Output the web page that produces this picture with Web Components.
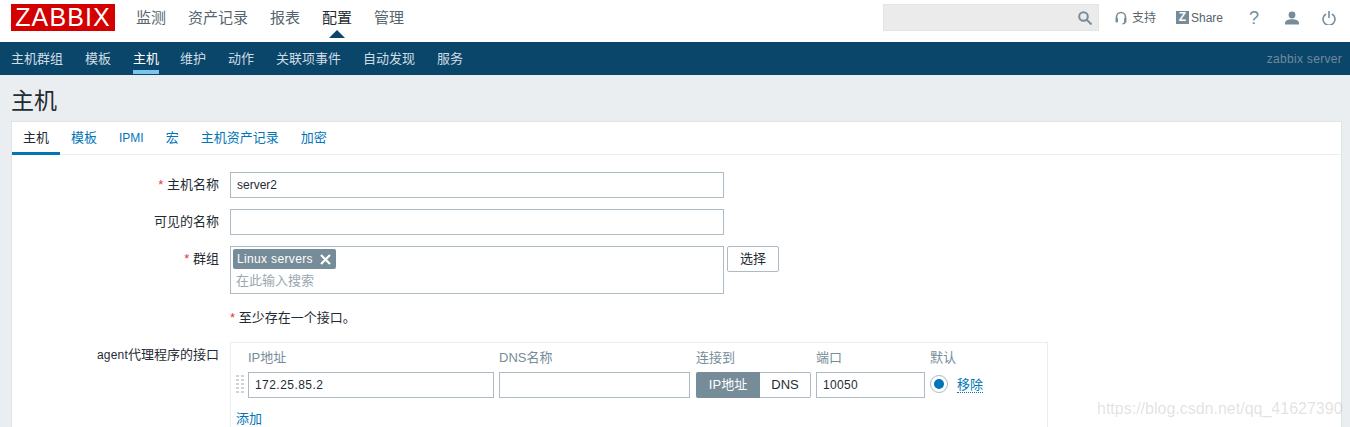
<!DOCTYPE html>
<html lang="zh">
<head>
<meta charset="utf-8">
<title>主机</title>
<style>
  html, body { margin: 0; height: 427px; overflow: hidden; }
  body {
    background: #ebeef0;
    color: #1f2c33;
    font: 13px/16px "Liberation Sans", "Noto Sans CJK SC", sans-serif;
    position: relative;
  }
</style>
</head>
<body>
<zbx-topbar></zbx-topbar>
<zbx-subnav server="zabbix server"></zbx-subnav>
<zbx-title>主机</zbx-title>
<zbx-card>
  <zbx-tabs></zbx-tabs>
  <zbx-row label="主机名称" required><zbx-input value="server2"></zbx-input></zbx-row>
  <zbx-row label="可见的名称"><zbx-input></zbx-input></zbx-row>
  <zbx-row label="群组" required><zbx-multiselect></zbx-multiselect></zbx-row>
  <zbx-row><zbx-note>至少存在一个接口。</zbx-note></zbx-row>
  <zbx-row label="agent代理程序的接口"><zbx-interfaces></zbx-interfaces></zbx-row>
</zbx-card>
<zbx-watermark>https://blog.csdn.net/qq_41627390</zbx-watermark>

<script>
const FONT = '"Liberation Sans", "Noto Sans CJK SC", sans-serif';

class ZbxTopbar extends HTMLElement {
  connectedCallback() {
    this.attachShadow({ mode: 'open' });
    const items = ['监测', '资产记录', '报表', '配置', '管理'];
    this.shadowRoot.innerHTML = `
      <style>
        :host { display: flex; align-items: flex-start; height: 42px; background: #fff; padding: 4px 14px 0 11px; box-sizing: border-box; font-family: ${FONT}; }
        .logo { width: 104px; height: 27px; background: #d40000; color: #fff; font-size: 25px; line-height: 27px; letter-spacing: 1.1px; text-align: center; overflow: hidden; }
        nav { display: flex; gap: 22px; margin-left: 21px; margin-top: 4px; font-size: 15px; line-height: 20px; color: #56646d; }
        nav .on { color: #1f2c33; position: relative; }
        nav .on::after { content: ""; position: absolute; left: 7px; top: 22px; border: 8px solid transparent; border-top: 0; border-bottom-color: #0a466a; }
        .right { margin-left: auto; height: 27px; display: flex; align-items: center; color: #56646d; font-size: 12px; white-space: nowrap; }
        .search { width: 216px; height: 27px; background: #ebebeb; border: 1px solid #e4e4e4; box-sizing: border-box; display: flex; align-items: center; justify-content: flex-end; padding-right: 6px; margin-right: 16px; }
        .link { display: flex; align-items: center; }
        .z { width: 13px; height: 13px; background: #768d99; color: #fff; font: bold 12px/13px "Liberation Sans", sans-serif; text-align: center; margin-right: 2px; }
        .q { margin-left: 25px; width: 10px; font-size: 18px; color: #768d99; text-align: center; }
        svg { display: block; flex: none; }
      </style>
      <div class="logo">ZABBIX</div>
      <nav>${items.map(t => `<span class="${t === '配置' ? 'on' : ''}">${t}</span>`).join('')}</nav>
      <div class="right">
        <div class="search">
          <svg width="14" height="14" viewBox="0 0 14 14" fill="none" stroke="#768d99" stroke-width="2"><circle cx="5.500" cy="5.500" r="4.300"/><path d="M8.700 8.700l4.800 4.800"/></svg>
        </div>
        <span class="link" style="width:41px;gap:5px">
          <svg width="12" height="14" viewBox="0 0 12 14" fill="none" stroke="#768d99" stroke-width="1.600"><path d="M1.500 8V6a4.500 4.500 0 0 1 9 0v2"/><rect x=".5" y="7" width="2.500" height="4.500" rx="1" fill="#768d99" stroke="none"/><rect x="9" y="7" width="2.500" height="4.500" rx="1" fill="#768d99" stroke="none"/><path d="M10 11q0 1.600-2.500 1.800"/></svg>
          <span>支持</span>
        </span>
        <span class="link" style="margin-left:20px;width:48px">
          <span class="z">Z</span><span>Share</span>
        </span>
        <span class="q">?</span>
        <svg style="margin-left:26px" width="14" height="14" viewBox="0 0 14 14" fill="#768d99"><circle cx="7" cy="4" r="3.400"/><path d="M0 13.500v-1.500c0-2.500 3-3.800 7-3.800s7 1.300 7 3.800v1.500z"/></svg>
        <svg style="margin-left:23px" width="14" height="14" viewBox="0 0 14 14" fill="none" stroke="#768d99" stroke-width="1.600"><path d="M4 3a6 6 0 1 0 6 0"/><path d="M7 0v7"/></svg>
      </div>`;
  }
}

class ZbxSubnav extends HTMLElement {
  connectedCallback() {
    this.attachShadow({ mode: 'open' });
    const items = ['主机群组', '模板', '主机', '维护', '动作', '关联项事件', '自动发现', '服务'];
    this.shadowRoot.innerHTML = `
      <style>
        :host { display: flex; align-items: flex-start; height: 33px; background: #0a466a; padding: 0 8px 0 11px; box-sizing: border-box; font-family: ${FONT}; font-size: 13px; line-height: 16px; color: #d0dde5; }
        nav { display: flex; gap: 22px; align-items: flex-start; }
        nav span { padding: 9px 0 3px; }
        nav .on { color: #fff; border-bottom: 4px solid #7cc4f0; margin-right: -1px; }
        .srv { margin-left: auto; padding-top: 9px; font-size: 12px; letter-spacing: .3px; color: #6f8a9b; }
      </style>
      <nav>${items.map(t => `<span class="${t === '主机' ? 'on' : ''}">${t}</span>`).join('')}</nav>
      <div class="srv">${this.getAttribute('server')}</div>`;
  }
}

class ZbxTitle extends HTMLElement {
  connectedCallback() {
    this.attachShadow({ mode: 'open' }).innerHTML = `
      <style>:host { display: block; height: 46px; padding: 13px 11px 0; box-sizing: border-box; font-size: 23px; line-height: 26px; color: #1f2c33; }</style>
      <slot></slot>`;
  }
}

class ZbxCard extends HTMLElement {
  connectedCallback() {
    this.attachShadow({ mode: 'open' }).innerHTML = `
      <style>:host { display: block; margin: 0 8px 0 11px; height: 320px; background: #fff; border: 1px solid #dfe4e7; box-sizing: border-box; }</style>
      <slot></slot>`;
  }
}

class ZbxTabs extends HTMLElement {
  connectedCallback() {
    this.attachShadow({ mode: 'open' });
    const items = ['主机', '模板', 'IPMI', '宏', '主机资产记录', '加密'];
    this.shadowRoot.innerHTML = `
      <style>
        :host { display: flex; height: 32px; border-bottom: 1px solid #ebeef0; margin-bottom: 17px; font-size: 13px; line-height: 16px; color: #0275b8; }
        span { padding: 8px 11px 0; box-sizing: border-box; height: 33px; }
        .on { color: #1f2c33; box-shadow: inset 0 -3px 0 #0275b8; width: 48px; }
        .latin { font-size: 12px; }
      </style>
      ${items.map((t, i) => `<span class="${i === 0 ? 'on' : ''} ${t === 'IPMI' ? 'latin' : ''}">${t}</span>`).join('')}`;
  }
}

class ZbxRow extends HTMLElement {
  connectedCallback() {
    this.attachShadow({ mode: 'open' });
    const label = (this.getAttribute('label') || '').replace(/^[a-z]+/, m => `<span class="latin">${m}</span>`);
    const req = this.hasAttribute('required') ? '<b>*</b> ' : '';
    this.shadowRoot.innerHTML = `
      <style>
        :host { display: grid; grid-template-columns: 207px 1fr; column-gap: 11px; margin-bottom: 11px; font-size: 13px; line-height: 16px; color: #1f2c33; }
        label { text-align: right; padding-top: 5px; }
        b { color: #e33734; font-weight: 400; }
        .latin { font-size: 12px; letter-spacing: .2px; }
      </style>
      <label>${req}${label}</label>
      <div><slot></slot></div>`;
  }
}

class ZbxInput extends HTMLElement {
  connectedCallback() {
    const w = this.getAttribute('width') || '494';
    const sp = this.getAttribute('spacing') || '0';
    this.attachShadow({ mode: 'open' }).innerHTML = `
      <style>
        :host { display: block; width: ${w}px; height: 26px; border: 1px solid #acbbc4; box-sizing: border-box; background: #fff; padding: 4px 6px 0; font-size: 12px; line-height: 16px; letter-spacing: ${sp}px; color: #1f2c33; }
      </style>
      ${this.getAttribute('value') || ''}`;
  }
}

class ZbxMultiselect extends HTMLElement {
  connectedCallback() {
    this.attachShadow({ mode: 'open' }).innerHTML = `
      <style>
        :host { display: flex; gap: 3px; align-items: flex-start; }
        .box { width: 494px; height: 48px; border: 1px solid #acbbc4; box-sizing: border-box; padding: 2px; }
        .tag { display: flex; align-items: center; justify-content: space-between; width: 103px; box-sizing: border-box; height: 20px; background: #768d99; color: #fff; border-radius: 2px; padding: 0 5px 0 4px; font-size: 12px; letter-spacing: .35px; }
        .ph { color: #9aa7af; font-size: 13px; line-height: 16px; padding: 4px 0 0 3px; }
        button { width: 52px; height: 26px; background: #fff; border: 1px solid #acbbc4; border-radius: 2px; font: 13px/16px ${FONT}; color: #1f2c33; padding: 0; }
        svg { display: block; }
      </style>
      <div class="box">
        <div class="tag"><span>Linux servers</span>
          <svg width="11" height="11" viewBox="0 0 11 11" stroke="#fff" stroke-width="2.200"><path d="M1 1l9 9M10 1l-9 9"/></svg>
        </div>
        <div class="ph">在此输入搜索</div>
      </div>
      <button>选择</button>`;
  }
}

class ZbxNote extends HTMLElement {
  connectedCallback() {
    this.attachShadow({ mode: 'open' }).innerHTML = `
      <style>:host { display: block; padding: 5px 0 0; height: 26px; box-sizing: border-box; } b { color: #e33734; font-weight: 400; }</style>
      <b>*</b> <slot></slot>`;
  }
}

class ZbxInterfaces extends HTMLElement {
  connectedCallback() {
    this.attachShadow({ mode: 'open' });
    const grip = Array.from({ length: 10 }, () => '<i></i>').join('');
    this.shadowRoot.innerHTML = `
      <style>
        :host { display: block; width: 818px; height: 90px; border: 1px solid #ebeef0; box-sizing: border-box; padding: 7px 5px 0; }
        .grid { display: grid; grid-template-columns: 7px 246px 191px 116px 109px auto; column-gap: 5px; }
        .head { color: #768d99; height: 22px; }
        .grip { display: grid; grid-template-columns: 3px 3px; gap: 2px; align-content: start; padding-top: 3px; }
        .grip i { height: 2px; background: #ccd5da; }
        .seg { display: flex; height: 26px; width: 115px; margin-left: 1px; font-size: 13px; line-height: 24px; text-align: center; box-sizing: border-box; }
        .seg span:first-child { width: 64px; background: #768d99; color: #fff; border-radius: 2px 0 0 2px; line-height: 26px; }
        .seg span:last-child { flex: 1; border: 1px solid #acbbc4; border-left: 0; border-radius: 0 2px 2px 0; }
        .def { display: flex; align-items: center; gap: 9px; height: 26px; }
        .radio { width: 18px; height: 18px; border: 1px solid #acbbc4; border-radius: 50%; box-sizing: border-box; display: flex; align-items: center; justify-content: center; margin-top: -2px; }
        .radio::after { content: ""; width: 10px; height: 10px; border-radius: 50%; background: #0275b8; }
        a { color: #0275b8; border-bottom: 1px dotted #0275b8; line-height: 15px; }
        .add { color: #0275b8; margin-top: 13px; }
      </style>
      <div class="grid head">
        <span></span><span>IP地址</span><span>DNS名称</span><span style="padding-left:1px">连接到</span><span>端口</span><span>默认</span>
      </div>
      <div class="grid">
        <div class="grip">${grip}</div>
        <zbx-input width="246" spacing=".45" value="172.25.85.2"></zbx-input>
        <zbx-input width="191"></zbx-input>
        <div class="seg"><span>IP地址</span><span>DNS</span></div>
        <zbx-input width="109" spacing=".3" value="10050"></zbx-input>
        <div class="def"><span class="radio"></span><a>移除</a></div>
      </div>
      <div class="add">添加</div>`;
  }
}

class ZbxWatermark extends HTMLElement {
  connectedCallback() {
    this.attachShadow({ mode: 'open' }).innerHTML = `
      <style>:host { position: absolute; left: 1097px; top: 398px; font-size: 16px; line-height: 22px; color: rgba(150,150,150,.28); white-space: nowrap; }</style>
      <slot></slot>`;
  }
}

customElements.define('zbx-topbar', ZbxTopbar);
customElements.define('zbx-subnav', ZbxSubnav);
customElements.define('zbx-title', ZbxTitle);
customElements.define('zbx-card', ZbxCard);
customElements.define('zbx-tabs', ZbxTabs);
customElements.define('zbx-row', ZbxRow);
customElements.define('zbx-input', ZbxInput);
customElements.define('zbx-multiselect', ZbxMultiselect);
customElements.define('zbx-note', ZbxNote);
customElements.define('zbx-interfaces', ZbxInterfaces);
customElements.define('zbx-watermark', ZbxWatermark);
</script>
</body>
</html>
